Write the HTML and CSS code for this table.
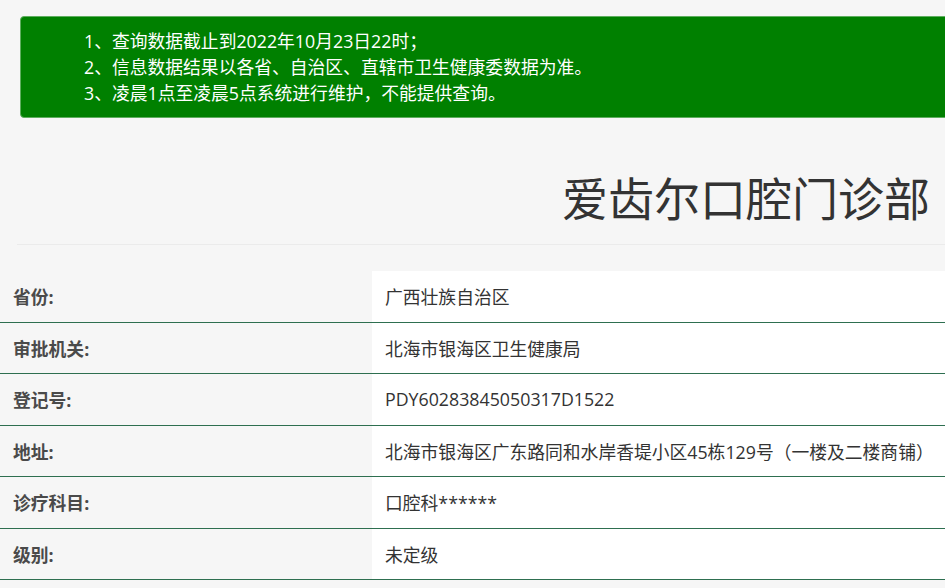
FILE: index.html
```html
<!DOCTYPE html>
<html lang="zh-CN">
<head>
<meta charset="utf-8">
<title>爱齿尔口腔门诊部</title>
<link rel="stylesheet" href="styles.css">
</head>
<body>
<div class="page">
  <div class="notice">
    <p>1、查询数据截止到2022年10月23日22时；</p>
    <p>2、信息数据结果以各省、自治区、直辖市卫生健康委数据为准。</p>
    <p>3、凌晨1点至凌晨5点系统进行维护，不能提供查询。</p>
  </div>
  <h1 class="title">爱齿尔口腔门诊部</h1>
  <div class="divider"></div>
  <table class="info">
    <tr><th>省份:</th><td>广西壮族自治区</td></tr>
    <tr><th>审批机关:</th><td>北海市银海区卫生健康局</td></tr>
    <tr><th>登记号:</th><td>PDY60283845050317D1522</td></tr>
    <tr><th>地址:</th><td>北海市银海区广东路同和水岸香堤小区45栋129号（一楼及二楼商铺）</td></tr>
    <tr><th>诊疗科目:</th><td>口腔科******</td></tr>
    <tr><th>级别:</th><td>未定级</td></tr>
  </table>
</div>
</body>
</html>
```

FILE: styles.css
```css
html, body {
  margin: 0;
  padding: 0;
  background: #f6f6f6;
  overflow-x: hidden;
}
body {
  font-family: "Open Sans", "Noto Sans CJK SC", sans-serif;
  color: #333;
}
.page {
  padding-top: 16px;
}
.notice {
  margin: 0 -6px 0 20px;
  background: #008000;
  border: 1px solid #5fae5f;
  border-radius: 4px;
  padding: 11px 0 11px 63px;
  color: #fff;
  font-size: 17.8px;
  line-height: 26px;
}
.notice p {
  margin: 0;
}
.title {
  margin: 51px 15px 0 0;
  text-align: right;
  font-family: "Noto Sans CJK SC", sans-serif;
  font-size: 46px;
  font-weight: normal;
  line-height: 54px;
  color: #333;
}
.divider {
  margin: 21px 0 0 17px;
  border-top: 1px solid #ebebeb;
}
.info {
  margin-top: 26px;
  width: 100%;
  border-collapse: collapse;
  font-size: 17.8px;
}
.info th, .info td {
  height: 50.5px;
  padding: 0 13px;
  border-bottom: 1px solid #2e6f50;
  text-align: left;
  vertical-align: middle;
}
.info th {
  width: 346px;
  background: #f6f6f6;
  color: #4a4a4a;
  font-weight: bold;
}
.info td {
  background: #fff;
  color: #333;
}
```
